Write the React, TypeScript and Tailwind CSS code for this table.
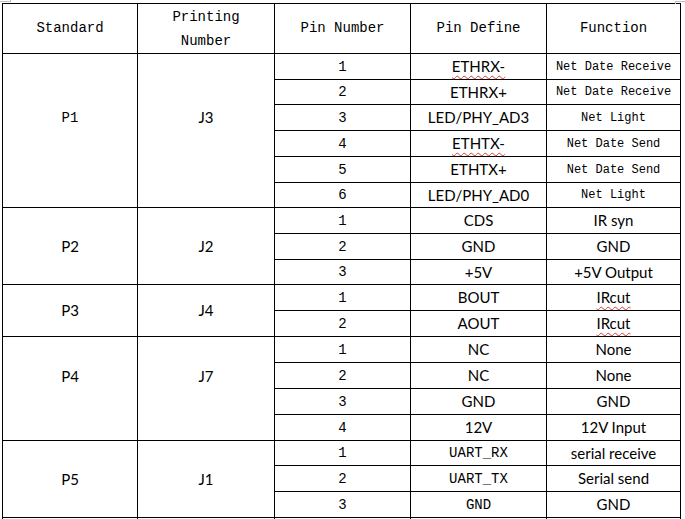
import React from "react";

const MONO = "font-['Liberation_Mono',monospace]";
const SANS = "font-['Lato','Open_Sans',sans-serif]";

type Row = {
  n: string;
  def: string;
  defMono?: boolean;
  defWavy?: boolean;
  fn: string;
  fnMono?: boolean;
  fnWavy?: boolean;
};

type Group = {
  std: string;
  stdMono?: boolean;
  pn: string;
  offset?: string;
  rows: Row[];
};

const groups: Group[] = [
  {
    std: "P1",
    stdMono: true,
    pn: "J3",
    offset: "pb-[26px]",
    rows: [
      { n: "1", def: "ETHRX-", defWavy: true, fn: "Net Date Receive", fnMono: true },
      { n: "2", def: "ETHRX+", fn: "Net Date Receive", fnMono: true },
      { n: "3", def: "LED/PHY_AD3", fn: "Net Light", fnMono: true },
      { n: "4", def: "ETHTX-", defWavy: true, fn: "Net Date Send", fnMono: true },
      { n: "5", def: "ETHTX+", fn: "Net Date Send", fnMono: true },
      { n: "6", def: "LED/PHY_AD0", fn: "Net Light", fnMono: true },
    ],
  },
  {
    std: "P2",
    pn: "J2",
    rows: [
      { n: "1", def: "CDS", fn: "IR syn" },
      { n: "2", def: "GND", fn: "GND" },
      { n: "3", def: "+5V", fn: "+5V Output" },
    ],
  },
  {
    std: "P3",
    pn: "J4",
    rows: [
      { n: "1", def: "BOUT", fn: "IRcut", fnWavy: true },
      { n: "2", def: "AOUT", fn: "IRcut", fnWavy: true },
    ],
  },
  {
    std: "P4",
    pn: "J7",
    offset: "pb-[25px]",
    rows: [
      { n: "1", def: "NC", fn: "None" },
      { n: "2", def: "NC", fn: "None" },
      { n: "3", def: "GND", fn: "GND" },
      { n: "4", def: "12V", fn: "12V Input" },
    ],
  },
  {
    std: "P5",
    pn: "J1",
    rows: [
      { n: "1", def: "UART_RX", defMono: true, fn: "serial receive" },
      { n: "2", def: "UART_TX", defMono: true, fn: "Serial send" },
      { n: "3", def: "GND", defMono: true, fn: "GND" },
    ],
  },
];

const spanClass: Record<number, string> = {
  2: "row-span-2",
  3: "row-span-3",
  4: "row-span-4",
  6: "row-span-6",
};

const cell = "flex items-center justify-center border-r border-b border-black text-black";
const wavy = "underline decoration-wavy decoration-[#d83a3a] decoration-1 underline-offset-[3px]";

function Txt({ mono, wavyLine, small, children }: { mono?: boolean; wavyLine?: boolean; small?: boolean; children: React.ReactNode }) {
  const font = mono ? `${MONO} ${small ? "text-[12px]" : "text-[14px]"}` : `${SANS} text-[15px]`;
  return <span className={`${font} leading-none ${wavyLine ? wavy : ""}`}>{children}</span>;
}

export default function App() {
  const cells: React.ReactNode[] = [];
  groups.forEach((g, gi) => {
    g.rows.forEach((r, ri) => {
      if (ri === 0) {
        const span = spanClass[g.rows.length];
        cells.push(
          <div key={`s${gi}`} className={`${cell} ${span} ${g.offset ?? ""}`}>
            <Txt mono={g.stdMono}>{g.std}</Txt>
          </div>
        );
        cells.push(
          <div key={`p${gi}`} className={`${cell} ${span} ${g.offset ?? ""}`}>
            <Txt>{g.pn}</Txt>
          </div>
        );
      }
      cells.push(
        <div key={`n${gi}-${ri}`} className={cell}>
          <Txt mono>{r.n}</Txt>
        </div>
      );
      cells.push(
        <div key={`d${gi}-${ri}`} className={cell}>
          <Txt mono={r.defMono} wavyLine={r.defWavy}>{r.def}</Txt>
        </div>
      );
      cells.push(
        <div key={`f${gi}-${ri}`} className={cell}>
          <Txt mono={r.fnMono} small={r.fnMono} wavyLine={r.fnWavy}>{r.fn}</Txt>
        </div>
      );
    });
  });

  return (
    <div className="relative w-[685px] h-[519px] overflow-hidden bg-white">
      <div className="absolute left-0 top-0 w-[11px] h-[2px] border-b border-r border-[#bdbdbd]" />
      <div className="absolute left-[675px] top-[1px] w-[10px] h-[3px] border-t border-l border-[#bdbdbd]" />
      <div className="ml-[2px] pt-[3px]">
        <div className="grid w-[679px] border-l border-t border-black grid-cols-[135px_137px_136px_136px_134px] grid-rows-[50px_26px_25px_26px_26px_26px_25px_26px_26px_25px_26px_26px_26px_26px_26px_26px_25px_26px_26px_26px]">
          <div className={cell}>
            <span className={`${MONO} text-[14px]`}>Standard</span>
          </div>
          <div className={`${cell} flex-col`}>
            <span className={`${MONO} text-[14px] leading-[24px]`}>Printing</span>
            <span className={`${MONO} text-[14px] leading-[24px]`}>Number</span>
          </div>
          <div className={cell}>
            <span className={`${MONO} text-[14px]`}>Pin Number</span>
          </div>
          <div className={cell}>
            <span className={`${MONO} text-[14px]`}>Pin Define</span>
          </div>
          <div className={cell}>
            <span className={`${MONO} text-[14px]`}>Function</span>
          </div>
          {cells}
          <div className={cell} />
          <div className={cell} />
          <div className={cell} />
          <div className={cell} />
          <div className={cell} />
        </div>
      </div>
    </div>
  );
}
